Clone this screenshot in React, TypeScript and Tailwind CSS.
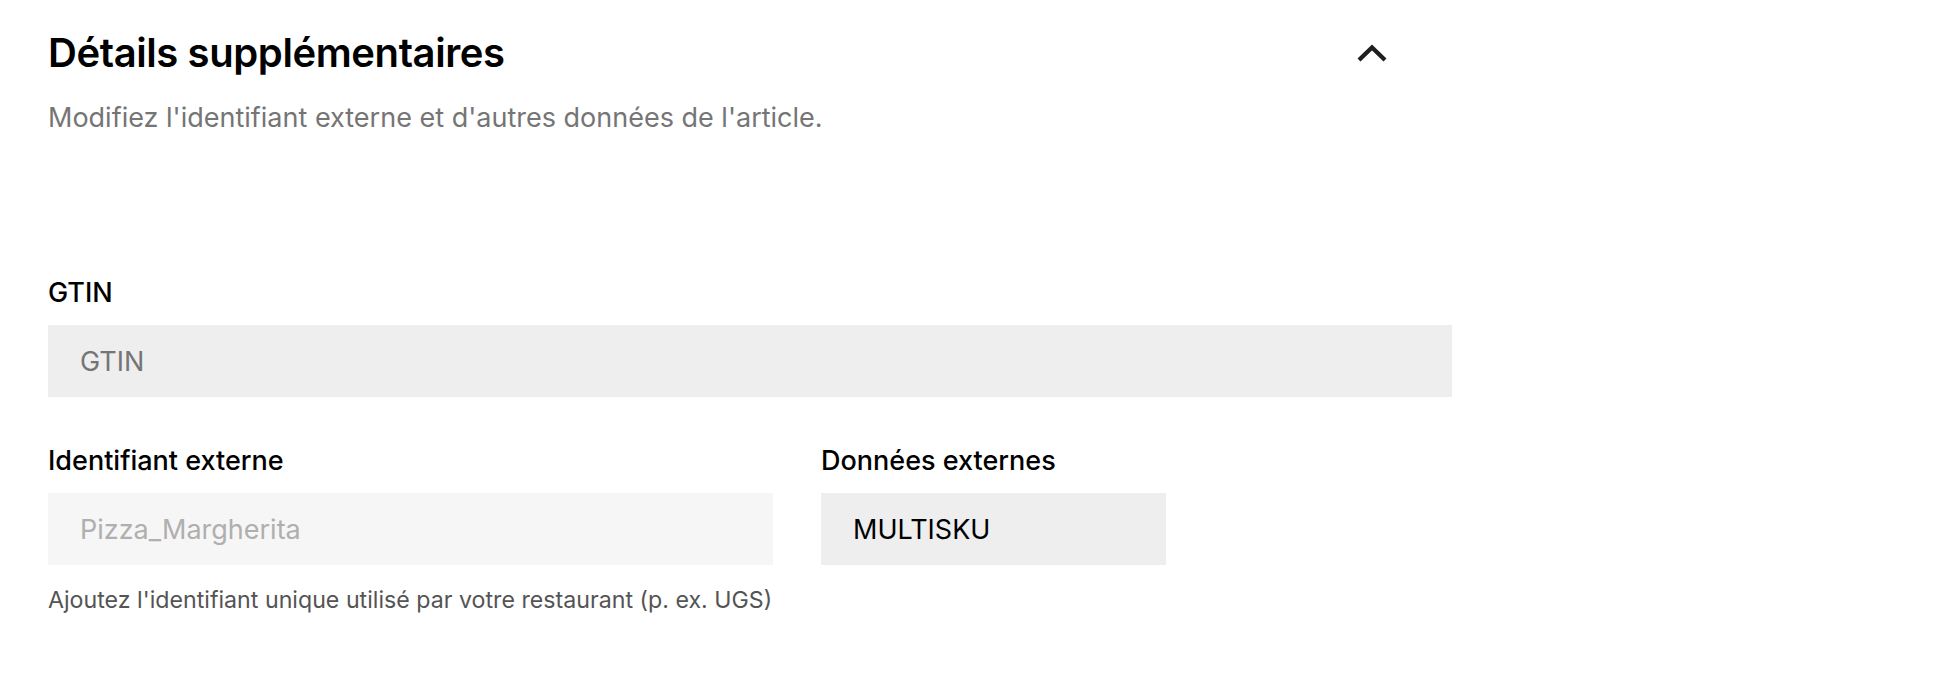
const FieldLabel = ({ children }: { children: React.ReactNode }) => (
  <label className="block text-[27px] leading-[28px] font-medium text-black">{children}</label>
);

const App = () => {
  return (
    <div className="min-h-screen bg-white font-['Inter',sans-serif] text-black">
      <section className="w-[1404px] ml-[48px] pt-[31px]">
        {/* header */}
        <div className="flex items-start justify-between">
          <div>
            <h2 className="text-[40px] leading-[44px] font-semibold tracking-[-0.4px]">Détails supplémentaires</h2>
            <p className="mt-[28px] text-[27px] leading-[30px] text-[#757575]">
              Modifiez l'identifiant externe et d'autres données de l'article.
            </p>
          </div>
          <button className="mr-[56px] mt-[-2px] flex h-12 w-12 items-center justify-center text-[#1f1f1f]">
            <svg width="30" height="18" viewBox="0 0 30 18" fill="none">
              <polyline
                points="2,16 15,3.5 28,16"
                stroke="currentColor"
                strokeWidth="4.3"
                strokeLinecap="butt"
                strokeLinejoin="miter"
              />
            </svg>
          </button>
        </div>

        {/* GTIN */}
        <div className="mt-[146px]">
          <FieldLabel>GTIN</FieldLabel>
          <input
            placeholder="GTIN"
            className="mt-[18px] block h-[72px] w-full bg-[#eeeeee] px-[32px] text-[27px] text-black outline-none placeholder:text-[#757575]"
          />
        </div>

        {/* identifiers */}
        <div className="mt-[50px] flex gap-[48px]">
          <div className="w-[725px]">
            <FieldLabel>Identifiant externe</FieldLabel>
            <input
              disabled
              placeholder="Pizza_Margherita"
              className="mt-[18px] block h-[72px] w-full bg-[#f6f6f6] px-[32px] text-[27px] outline-none placeholder:text-[#afafaf]"
            />
            <p className="mt-[22px] whitespace-nowrap text-[23.2px] leading-[26px] text-[#545454]">
              Ajoutez l'identifiant unique utilisé par votre restaurant (p. ex. UGS)
            </p>
          </div>
          <div className="w-[345px]">
            <FieldLabel>Données externes</FieldLabel>
            <input
              defaultValue="MULTISKU"
              className="mt-[18px] block h-[72px] w-full bg-[#eeeeee] px-[32px] text-[27px] text-black outline-none"
            />
          </div>
        </div>
      </section>
    </div>
  );
};

export default App;
